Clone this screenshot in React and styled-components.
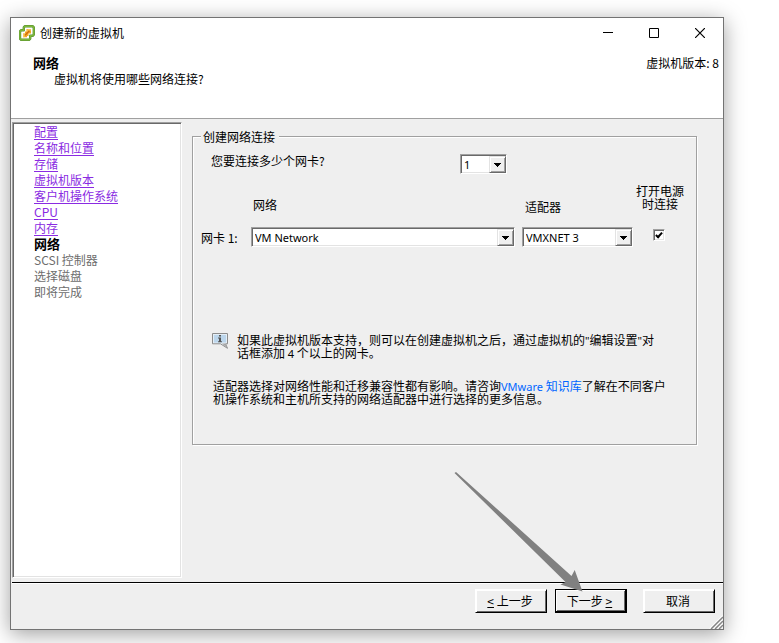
import React from "react";
import styled, { createGlobalStyle, css } from "styled-components";

const GlobalStyle = createGlobalStyle`
  *, *::before, *::after { box-sizing: border-box; }
  body {
    margin: 0;
    background: #fff;
    color: #000;
    font: 12px/13px "Noto Sans CJK SC", "Noto Sans", sans-serif;
    overflow: hidden;
  }
`;

const Desktop = styled.div`
  display: flex;
  min-height: 100vh;
  padding: 17px 55px 13px 10px;
`;

const Window = styled.section`
  position: relative;
  flex: 1;
  display: flex;
  flex-direction: column;
  background: #efefef;
  border: 1px solid #737373;
  box-shadow: 0 4px 20px rgba(0, 0, 0, 0.38);
`;

const TitleBar = styled.header`
  display: flex;
  align-items: center;
  height: 29px;
  padding-left: 8px;
  background: #fff;
`;

const Title = styled.h1`
  flex: 1;
  margin: 0 0 0 5px;
  font-size: 12px;
  font-weight: 400;
`;

const CaptionButton = styled.button`
  display: flex;
  align-items: center;
  justify-content: center;
  width: 46px;
  height: 28px;
  padding: 0;
  border: 0;
  background: none;
`;

const Banner = styled.div`
  display: flex;
  justify-content: space-between;
  height: 72px;
  padding: 8px 4px 0 22px;
  line-height: 16px;
  background: #fff;
  border-bottom: 1px solid #a0a0a0;
  margin-bottom: 1px;
`;

const BannerTitle = styled.h2`
  margin: 0;
  font-size: 13px;
  font-weight: 700;
  line-height: 16px;
`;

const BannerText = styled.p`
  margin: 0 0 0 21px;
`;

const Latin = styled.span`
  font-family: "Noto Sans", "Noto Sans CJK SC", sans-serif;
  font-size: 11px;
  line-height: 0;
`;

const Body = styled.div`
  flex: 1;
  display: flex;
  padding: 2px 26px 4px 1px;
`;

const sunken = css`
  border: 1px solid;
  border-color: #a0a0a0 #fff #fff #a0a0a0;
  box-shadow: inset 1px 1px 0 #696969, inset -1px -1px 0 #e3e3e3;
`;

const Steps = styled.nav`
  ${sunken}
  width: 170px;
  padding: 1px 0 0 21px;
  background: #fff;
`;

const StepList = styled.ol`
  margin: 0;
  padding: 0;
  list-style: none;
  line-height: 16px;
`;

const StepLink = styled.a`
  color: #8a2be2;
  text-decoration: underline;
  text-underline-offset: 2px;
`;

const StepCurrent = styled.strong`
  font-size: 13px;
  line-height: 0;
`;

const StepPending = styled.span`
  color: #6d6d6d;
`;

const Content = styled.main`
  flex: 1;
  padding: 8px 0 0 10px;
`;

const Group = styled.fieldset`
  min-width: 0;
  margin: 0;
  padding: 0 9px 39px 8px;
  border: 1px solid #a0a0a0;
  box-shadow: inset 1px 1px 0 #fff, 1px 1px 0 #fff;
`;

const Legend = styled.legend`
  padding: 0 4px 0 2px;
  background: #efefef;
`;

const CountRow = styled.div`
  display: grid;
  grid-template-columns: 249px 47px;
  align-items: start;
  margin-top: 11px;
  padding-left: 10px;
`;

const AdapterGrid = styled.div`
  display: grid;
  grid-template-columns: 50px 1fr 111px 54px;
`;

const HeadRow = styled(AdapterGrid)`
  align-items: start;
  margin-top: 10px;
`;

const AdapterRow = styled(AdapterGrid)`
  align-items: center;
  margin-top: 14px;
`;

const HeadCell = styled.div`
  padding: 14px 0 0 2px;
`;

const AdapterHead = styled.div`
  padding: 16px 0 0 3px;
`;

const CheckHead = styled.label`
  text-align: center;
`;

const SelectFrame = styled.span`
  ${sunken}
  position: relative;
  display: block;
  height: 20px;
  margin-right: ${(p) => (p.$spaced ? "7px" : "0")};
  padding: 2px 1px 0;
  background: #fff;
`;

const NativeSelect = styled.select`
  display: block;
  appearance: none;
  width: 100%;
  height: 16px;
  padding: 0 18px 0 2px;
  border: 0;
  border-radius: 0;
  outline: 0;
  background: transparent;
  color: #000;
  font: 11px/16px "Noto Sans", "Noto Sans CJK SC", sans-serif;
`;

const DropArrow = styled.span`
  position: absolute;
  top: 1px;
  right: 0;
  display: flex;
  align-items: center;
  justify-content: center;
  width: 17px;
  height: 17px;
  background: #efefef;
  border: 1px solid;
  border-color: #e3e3e3 #696969 #696969 #e3e3e3;
  box-shadow: inset 1px 1px 0 #fff, inset -1px -1px 0 #a0a0a0;
  pointer-events: none;
`;

const CheckCell = styled.span`
  display: flex;
  justify-content: center;
  padding: 0 2px 4px 0;
`;

const CheckBox = styled.input`
  ${sunken}
  appearance: none;
  display: grid;
  place-items: center;
  width: 12px;
  height: 12px;
  margin: 0;
  background: #fff;
  &:checked::after {
    content: "";
    width: 4px;
    height: 7px;
    margin-bottom: 2px;
    border: solid #000;
    border-width: 0 2px 2px 0;
    transform: rotate(42deg);
  }
`;

const Hint = styled.div`
  display: flex;
  gap: 9px;
  margin-top: 86px;
  padding-left: 11px;
`;

const HintText = styled.p`
  flex: 1;
  max-width: 425px;
  margin: 0;
`;

const Advice = styled.p`
  max-width: 472px;
  margin: 20px 0 0;
  padding-left: 12px;
`;

const KbLink = styled.a`
  color: #06f;
  text-decoration: none;
`;

const Footer = styled.footer`
  display: flex;
  justify-content: flex-end;
  gap: 8px;
  padding: 6px 8px 16px;
  border-top: 1px solid #000;
  box-shadow: inset 0 1px 0 #fff;
  margin-left: 1px;
`;

const PushButton = styled.button`
  display: block;
  width: 72px;
  height: 24px;
  margin-left: ${(p) => (p.$apart ? "8px" : "0")};
  padding: 0 2px 1px 0;
  font: inherit;
  color: #000;
  background: #efefef;
  border: solid;
  border-width: ${(p) => (p.$primary ? "1px 2px 2px 1px" : "1px")};
  border-color: ${(p) => (p.$primary ? "#000" : "#fff #000 #000 #fff")};
  box-shadow: inset 1px 1px 0 #fff, inset -1px -1px 0 #696969;
`;

const NextSlot = styled.div`
  position: relative;
`;

const Pointer = styled.svg`
  position: absolute;
  left: -101px;
  top: -119px;
  pointer-events: none;
`;

const Grip = styled.svg`
  position: absolute;
  right: 0;
  bottom: 0;
`;

const steps = [
  ["配置", "done"],
  ["名称和位置", "done"],
  ["存储", "done"],
  ["虚拟机版本", "done"],
  ["客户机操作系统", "done"],
  ["CPU", "done"],
  ["内存", "done"],
  ["网络", "current"],
  ["SCSI 控制器", "pending"],
  ["选择磁盘", "pending"],
  ["即将完成", "pending"],
];

function Step({ label, state }) {
  if (state === "done") return <StepLink href="#">{label}</StepLink>;
  if (state === "current") return <StepCurrent aria-current="step">{label}</StepCurrent>;
  return <StepPending>{label}</StepPending>;
}

function DropDown({ spaced, options, ...rest }) {
  return (
    <SelectFrame $spaced={spaced}>
      <NativeSelect {...rest}>
        {options.map((o) => (
          <option key={o}>{o}</option>
        ))}
      </NativeSelect>
      <DropArrow>
        <svg width="7" height="4" viewBox="0 0 7 4" shapeRendering="crispEdges">
          <path d="M0 0h7v1H6v1H5v1H4v1H3V3H2V2H1V1H0z" />
        </svg>
      </DropArrow>
    </SelectFrame>
  );
}

function ClientLogo() {
  return (
    <svg width="16" height="16" viewBox="0 0 16 16" fill="none" strokeLinejoin="round">
      <path d="M6 1.2h7.6l1.2 1.2v7.2l-1.2 1.2h-2.4v2.8L10 14.8H2.2L1 13.6V6.4l1.2-1.2h2.6V2.4z" fill="#fff" stroke="#568f2c" strokeWidth="2.4" />
      <path d="M6 1.2h7.6l1.2 1.2v7.2l-1.2 1.2h-2.4v2.8L10 14.8H2.2L1 13.6V6.4l1.2-1.2h2.6V2.4z" stroke="#7db83a" strokeWidth="1.4" />
      <path d="M7.500 4H12v4.500H9.500V11H8v1.300H4V8.500h2V6.500h1.500z" fill="#f5a623" />
      <path d="M8.500 4H12v1.500H9.500V8H8zM4 8.500h3V10H5.500v2.300H4z" fill="#f8c85a" />
      <path d="M6 10.200l4.400-4.400" stroke="#d06c0a" strokeWidth="1.400" />
    </svg>
  );
}

function InfoIcon() {
  return (
    <svg width="16" height="16" viewBox="0 0 16 16">
      <path d="M.5.5h15v10.300h-2l2 4.500-7-4.500h-8z" fill="#e4eef6" stroke="#8c8c8c" />
      <path d="M2 2h12v7.500H2z" fill="#bcd6ec" />
      <path d="M10 10.500h3l2 4.500z" fill="#a6a6a6" />
      <path d="M7 2h2v1.500H7zM6 4.500h3v3.700h1v1H6v-1h1V5.400H6z" fill="#555" />
    </svg>
  );
}

export default function App() {
  return (
    <>
      <GlobalStyle />
      <Desktop>
        <Window>
          <TitleBar>
            <ClientLogo />
            <Title>创建新的虚拟机</Title>
            <CaptionButton aria-label="最小化">
              <svg width="10" height="11" viewBox="0 0 10 11"><path d="M0 5.5h10" stroke="#000" /></svg>
            </CaptionButton>
            <CaptionButton aria-label="最大化">
              <svg width="10" height="10" viewBox="0 0 10 10"><path d="M.5.5h9v9h-9z" fill="none" stroke="#000" /></svg>
            </CaptionButton>
            <CaptionButton aria-label="关闭">
              <svg width="10" height="10" viewBox="0 0 10 10"><path d="M0 0l10 10M10 0L0 10" stroke="#000" strokeWidth="1.200" /></svg>
            </CaptionButton>
          </TitleBar>

          <Banner>
            <div>
              <BannerTitle>网络</BannerTitle>
              <BannerText>虚拟机将使用哪些网络连接?</BannerText>
            </div>
            <span>虚拟机版本: 8</span>
          </Banner>

          <Body>
            <Steps>
              <StepList>
                {steps.map(([label, state]) => (
                  <li key={label}>
                    <Step label={label} state={state} />
                  </li>
                ))}
              </StepList>
            </Steps>

            <Content>
              <Group>
                <Legend>创建网络连接</Legend>
                <CountRow>
                  <label htmlFor="nic-count">您要连接多少个网卡?</label>
                  <DropDown id="nic-count" options={["1", "2", "3", "4"]} />
                </CountRow>

                <HeadRow>
                  <span />
                  <HeadCell>网络</HeadCell>
                  <AdapterHead>适配器</AdapterHead>
                  <CheckHead htmlFor="power-on">
                    打开电源
                    <br />
                    时连接
                  </CheckHead>
                </HeadRow>
                <AdapterRow>
                  <label htmlFor="network">网卡 1:</label>
                  <DropDown id="network" spaced options={["VM Network"]} />
                  <DropDown aria-label="适配器" options={["VMXNET 3"]} />
                  <CheckCell>
                    <CheckBox id="power-on" type="checkbox" defaultChecked />
                  </CheckCell>
                </AdapterRow>

                <Hint>
                  <InfoIcon />
                  <HintText>
                    如果此虚拟机版本支持，则可以在创建虚拟机之后，通过虚拟机的<Latin>"</Latin>编辑设置<Latin>"</Latin>对话框添加 <Latin>4</Latin> 个以上的网卡。
                  </HintText>
                </Hint>
                <Advice>
                  适配器选择对网络性能和迁移兼容性都有影响。请咨询
                  <KbLink href="#"><Latin>VMware</Latin> 知识库</KbLink>
                  了解在不同客户机操作系统和主机所支持的网络适配器中进行选择的更多信息。
                </Advice>
              </Group>
            </Content>
          </Body>

          <Footer>
            <PushButton><u>&lt;</u> 上一步</PushButton>
            <NextSlot>
              <PushButton $primary>下一步 <u>&gt;</u></PushButton>
              <Pointer width="130" height="123" viewBox="0 0 130 123" aria-hidden="true">
                <path d="M.5 3L2 2l115.500 104 3.200-6L128.500 121.500 106.500 114.500l5-2.500z" fill="#808080" />
              </Pointer>
            </NextSlot>
            <PushButton $apart>取消</PushButton>
          </Footer>
          <Grip width="14" height="14" viewBox="0 0 14 14" aria-hidden="true">
            <path d="M1 14L14 1M5 14l9-9M9 14l5-5" stroke="#fff" strokeWidth="2" />
            <path d="M2 14L14 2M6 14l8-8M10 14l4-4" stroke="#858585" strokeWidth="1.500" />
          </Grip>
        </Window>
      </Desktop>
    </>
  );
}
